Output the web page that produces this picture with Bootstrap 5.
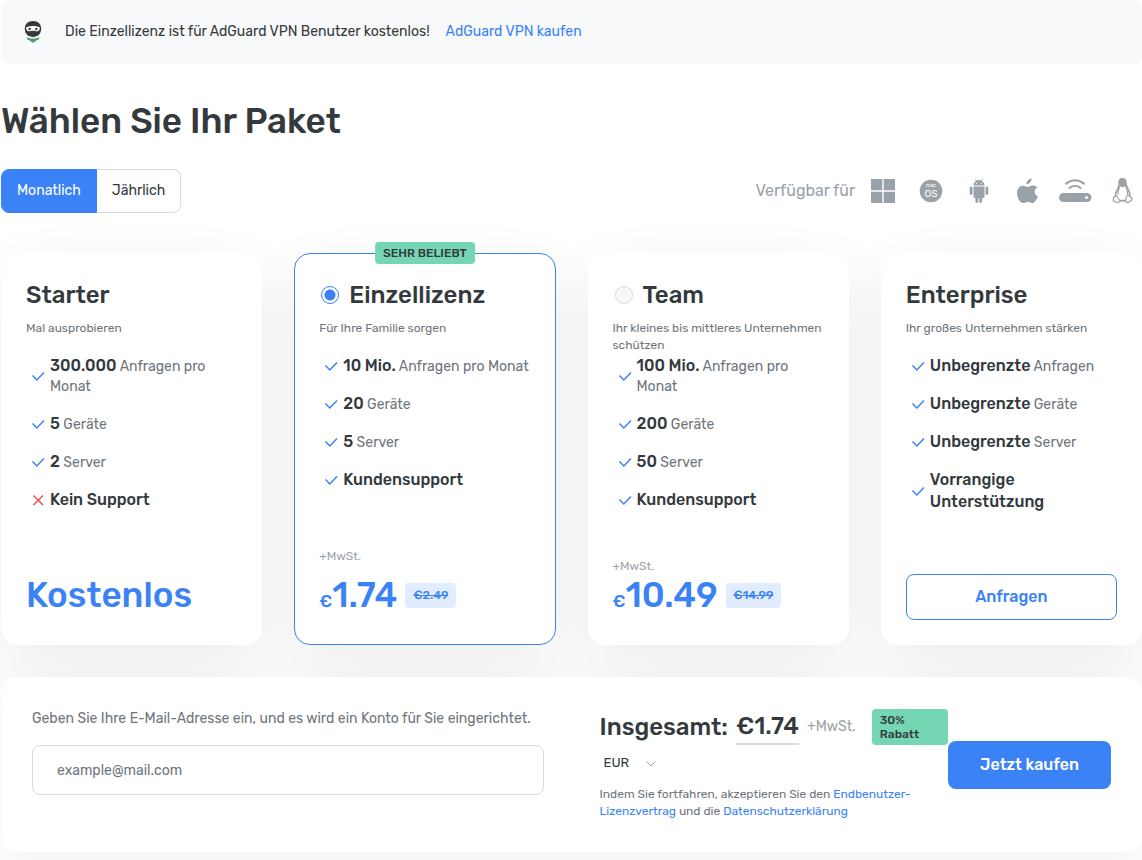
<!DOCTYPE html>
<html lang="de">
<head>
<meta charset="utf-8">
<meta name="viewport" content="width=device-width, initial-scale=1">
<title>AdGuard DNS – Wählen Sie Ihr Paket</title>
<link href="https://cdn.jsdelivr.net/npm/bootstrap@5.3.0/dist/css/bootstrap.min.css" rel="stylesheet">
<style>
:root{--ink:#33393d;--soft:#6f757b;--faint:#9aa2a9;--blue:#3c82f7;--green:#74d6b3}
body{font-family:Rubik,Roboto,"Liberation Sans",sans-serif;color:var(--ink);background:#fff;font-size:14px;line-height:20px;padding:0 0 8px 1px;overflow-x:hidden}
a{color:var(--blue);text-decoration:none}
strong,h1,h2{font-weight:500}
.text-soft{color:var(--soft)}
.text-faint{color:var(--faint)}
.notice{background:#f8f9fb;border-radius:8px;min-height:64px;padding:0 20px;line-height:22px}
.notice svg{margin-right:20px}
.page-title{font-size:35px;line-height:44px;margin:35px 0 26px}
.period .btn{font-size:14px;line-height:22px;padding:10px 15px;border:1px solid #d8dadd;border-radius:8px;color:var(--ink)}
.period .btn:last-child{border-left:0;margin-left:0;padding-left:16px}
.period .btn-check:checked+.btn{background:var(--blue);border-color:var(--blue);color:#fff}
.platforms{color:var(--faint);font-size:16px;line-height:22px;gap:16px;padding-right:7px}
.platform-icons{gap:24px}
.platforms svg{overflow:visible;display:block}
.offer{isolation:isolate}
.plans{display:grid;grid-template-columns:repeat(4,minmax(0,1fr));gap:32px;margin:40px 0 32px}
.plan{position:relative;background:#fff;border:1px solid #fff;border-radius:16px;padding:24px}
.plan::before,.order::before{content:"";position:absolute;inset:0;z-index:-1;border-radius:16px;box-shadow:0 20px 60px rgba(0,0,0,.08)}
.order::before{box-shadow:0 8px 48px rgba(0,0,0,.06)}
.plan.chosen{border-color:var(--blue)}
.plan-name{font-size:24px;line-height:34px;margin-bottom:8px}
.plan-name .form-check-input{width:18px;height:18px;margin:0 10px 0 2px;background-color:#f6f7f9;border-color:#d8dadd;flex:none}
.plan-name .form-check-input:checked{background:radial-gradient(circle,var(--blue) 5px,#fff 6px);border-color:var(--blue)}
.plan-note{font-size:12px;line-height:17px;min-height:35px;color:var(--soft);margin:0}
.features{list-style:none;margin:0;padding:0 0 46px;display:grid;gap:16px}
.features li{display:grid;grid-template-columns:24px 1fr;align-items:center;color:var(--soft)}
.features strong{font-size:16px;line-height:22px;color:var(--ink)}
.features svg{width:24px;height:20px}
.vat{font-size:12px;line-height:18px;color:var(--faint);margin-bottom:10px}
.price{font-size:35px;line-height:40px;height:45px;font-weight:500;color:var(--blue)}
.price-sign{font-size:17px}
.price del{font-size:12px;line-height:16px;background:#e1ecfe;border-radius:4px;padding:4px 8px 5px;margin:0 0 4px 8px;align-self:center}
.tag{background:var(--green);border-radius:4px;font-size:12px;line-height:14px;font-weight:500}
.popular{position:absolute;top:-12px;left:50%;transform:translateX(-50%);padding:4px 8px;white-space:nowrap}
.ask{border:1px solid var(--blue);color:var(--blue);border-radius:8px;font-weight:500;font-size:16px;line-height:22px;padding:11px}
.ask:hover,.buy:hover{background:var(--blue);color:#fff}
.order{position:relative;background:#fff;border-radius:16px;padding:32px 31px;display:grid;grid-template-columns:repeat(2,minmax(0,1fr));gap:56px}
.mail{border:1px solid #d8dadd;border-radius:8px;padding:14px 24px;height:50px;font-size:14px}
.mail::placeholder{color:var(--soft)}
.total{font-size:24px;line-height:34px;font-weight:500}
.total-sum{border-bottom:2px solid #dcdcdc}
.currency{appearance:none;border:0;font-size:13px;line-height:20px;color:var(--ink);padding:0 29px 0 4px;background:url("data:image/svg+xml,%3Csvg xmlns='http://www.w3.org/2000/svg' width='10' height='6' fill='none' stroke='%239aa2a9'%3E%3Cpath d='M.5.5 5 5 9.5.5'/%3E%3C/svg%3E") no-repeat right 3px top 8px}
.terms{font-size:12px;line-height:17px;color:var(--soft);margin:13px 0 0}
.buy{background:var(--blue);color:#fff;font-weight:500;font-size:16px;line-height:24px;padding:12px;border:0;border-radius:8px;width:163px;flex:none}
@media(max-width:900px){.plans{grid-template-columns:repeat(2,minmax(0,1fr))}.order{grid-template-columns:1fr}}
</style>
</head>
<body>
<svg class="d-none" aria-hidden="true">
  <symbol id="check" viewBox="0 0 24 20"><path d="M6.500 9.500 10.800 14 18 6.500" fill="none" stroke="#3c82f7" stroke-width="1.500"/></symbol>
  <symbol id="cross" viewBox="0 0 24 20"><path d="M7.500 5.500l9.500 9.500M17 5.500L7.500 15" fill="none" stroke="#eb5252" stroke-width="1.500"/></symbol>
</svg>

<div class="notice d-flex align-items-center">
  <svg class="flex-shrink-0" width="24" height="24" viewBox="0 0 24 24" aria-hidden="true">
    <path d="M5.500 17c4 2 9 2 13 0l-1 2.700-1.800.6L12 23l-3.700-2.700-1.800-.6z" fill="#4f9c7b"/>
    <path d="M12 1c5 0 8.200 3 8.200 7.800 0 5-3.400 8.200-8.200 8.200s-8.200-3.200-8.200-8.200C3.800 4 7 1 12 1z" fill="#33393d"/>
    <path d="M5.200 7.200c4.200-1.500 9.400-1.500 13.600 0 .2 2.200-.6 3.800-2.300 4-1.500.2-2.700-.5-4.500-.5s-3 .7-4.500.5c-1.700-.2-2.500-1.800-2.300-4z" fill="#fff"/>
    <circle cx="8.700" cy="9" r="1.200" fill="#33393d"/><circle cx="15.300" cy="9" r="1.200" fill="#33393d"/>
  </svg>
  <span>Die Einzellizenz ist für AdGuard VPN Benutzer kostenlos!</span>
  <a href="#" class="ms-3">AdGuard VPN kaufen</a>
</div>

<h1 class="page-title">Wählen Sie Ihr Paket</h1>

<div class="d-flex flex-wrap justify-content-between align-items-center">
  <div class="btn-group period" role="group" aria-label="Abrechnungszeitraum">
    <input type="radio" class="btn-check" name="period" id="monthly" checked><label class="btn" for="monthly">Monatlich</label>
    <input type="radio" class="btn-check" name="period" id="yearly"><label class="btn" for="yearly">Jährlich</label>
  </div>
  <div class="platforms d-flex align-items-center">
    <span>Verfügbar für</span>
    <div class="platform-icons d-flex">
    <svg width="24" height="24" viewBox="0 0 24 24" fill="currentColor"><path d="M0 0h11.300v11.300H0zM12.700 0H24v11.300H12.700zM0 12.700h11.300V24H0zM12.700 12.700H24V24H12.700z"/></svg>
    <svg width="24" height="24" viewBox="0 0 24 24"><circle cx="12" cy="12" r="11.300" fill="currentColor"/><g fill="#fff" text-anchor="middle"><text x="12" y="8" font-size="5">mac</text><text x="12" y="17.500" font-size="10">OS</text></g></svg>
    <svg width="24" height="24" viewBox="0 0 24 24" fill="currentColor"><path d="M8.100.1a.3.3 0 0 1 .5-.2l1.100 1.700a6 6 0 0 1 4.600 0L15.400-.1a.3.3 0 0 1 .5.2l-1 1.900c1.600.9 2.500 2.400 2.600 4.500h-11c.1-2.100 1-3.600 2.600-4.500z"/><path d="M6.500 7.500h11v10.200a1.300 1.300 0 0 1-1.300 1.300h-1.100v3.600a1.450 1.450 0 0 1-2.900 0V19h-.9v3.600a1.450 1.450 0 0 1-2.900 0V19H7.800a1.300 1.300 0 0 1-1.300-1.300z"/><rect x="2.700" y="7.500" width="2.800" height="8.500" rx="1.400"/><rect x="18.500" y="7.500" width="2.800" height="8.500" rx="1.400"/><circle cx="9.500" cy="4.300" r=".6" fill="#fff"/><circle cx="14.500" cy="4.300" r=".6" fill="#fff"/></svg>
    <svg width="24" height="24" viewBox="0 0 24 24" fill="currentColor"><path d="M16.500-.5c.2 2.600-2 5.800-5 5.700-.3-2.600 2.200-5.500 5-5.700zM22.300 8.300c-3.800 2.300-3.300 7.300.6 8.900-.9 2.600-3 6.700-5.300 6.900-1.700.1-2.600-1.100-4.800-1.100s-3.200 1.100-4.800 1.100C5.200 24.100 2 18.900 2 14c0-4.600 2.900-7.300 6-7.300 1.900 0 3.300 1.200 4.600 1.200 1.200 0 3-1.400 5.400-1.300 1.500.1 3.200.6 4.300 1.700z"/></svg>
    <svg width="24" height="24" viewBox="0 0 24 24" fill="currentColor"><path fill-rule="evenodd" d="M.5 14h23.500a4.500 4.500 0 0 1 0 9H.5a4.500 4.500 0 0 1 0-9zm23 3a1.500 1.500 0 1 0 0 3 1.500 1.500 0 0 0 0-3z"/><path d="M3 4.600C8.500.2 15.500.2 21 4.600M6.500 9c3.300-2.700 7.700-2.700 11 0" fill="none" stroke="currentColor" stroke-width="2" stroke-linecap="round"/></svg>
    <svg width="24" height="24" viewBox="0 0 24 24" fill="none" stroke="currentColor" stroke-width="1.200" stroke-linejoin="round"><path d="M8 4C8 1 9.300-.2 11.400-.2S15 1.400 15 4c0 3.300 1.200 4.400 2.600 7.200 1 2 1.600 3.600 1.300 5.800l-1 4.500H5.500L4.300 17c-.2-2 .7-4 1.900-6C7.600 8.600 8.200 7 8 4z" stroke-width="1.500"/><path d="M8 4C8 1 9.300-.2 11.400-.2S15 1.400 15 4l.4 2.500-1 1-2.900.8-2.700-1z" fill="currentColor" stroke="none"/><path d="M8.800 7.500C7.500 10.500 6.700 12 6.700 15.500M14.700 7.500c1.500 3 2.400 5.500 2.100 8.500M8.500 22h6"/><path d="M5 16.500l3.800 5c0 1.500-1 2.200-2.600 2l-4-1.500.3-3.500zM18.300 16.500l2.700 3-.4 1.700-3.400 2.300c-1.500.4-2.500-.3-2.400-2l.8-4.500z" fill="#fff"/></svg>
    </div>
  </div>
</div>

<main>
<form class="offer">
<section class="plans">
  <article class="plan d-flex flex-column">
    <h2 class="plan-name">Starter</h2>
    <p class="plan-note">Mal ausprobieren</p>
    <ul class="features">
      <li><svg><use href="#check"/></svg><span><strong>300.000</strong> Anfragen pro Monat</span></li>
      <li><svg><use href="#check"/></svg><span><strong>5</strong> Geräte</span></li>
      <li><svg><use href="#check"/></svg><span><strong>2</strong> Server</span></li>
      <li><svg><use href="#cross"/></svg><strong>Kein Support</strong></li>
    </ul>
    <div class="price mt-auto">Kostenlos</div>
  </article>

  <article class="plan chosen d-flex flex-column">
    <span class="tag popular">SEHR BELIEBT</span>
    <h2 class="plan-name"><label class="d-flex align-items-center"><input class="form-check-input" type="radio" name="plan" checked>Einzellizenz</label></h2>
    <p class="plan-note">Für Ihre Familie sorgen</p>
    <ul class="features">
      <li><svg><use href="#check"/></svg><span><strong>10 Mio.</strong> Anfragen pro Monat</span></li>
      <li><svg><use href="#check"/></svg><span><strong>20</strong> Geräte</span></li>
      <li><svg><use href="#check"/></svg><span><strong>5</strong> Server</span></li>
      <li><svg><use href="#check"/></svg><strong>Kundensupport</strong></li>
    </ul>
    <div class="vat mt-auto">+MwSt.</div>
    <div class="price d-flex align-items-baseline"><span class="price-sign">€</span>1.74<del>€2.49</del></div>
  </article>

  <article class="plan d-flex flex-column">
    <h2 class="plan-name"><label class="d-flex align-items-center"><input class="form-check-input" type="radio" name="plan">Team</label></h2>
    <p class="plan-note">Ihr kleines bis mittleres Unternehmen schützen</p>
    <ul class="features">
      <li><svg><use href="#check"/></svg><span><strong>100 Mio.</strong> Anfragen pro Monat</span></li>
      <li><svg><use href="#check"/></svg><span><strong>200</strong> Geräte</span></li>
      <li><svg><use href="#check"/></svg><span><strong>50</strong> Server</span></li>
      <li><svg><use href="#check"/></svg><strong>Kundensupport</strong></li>
    </ul>
    <div class="vat mt-auto mb-0">+MwSt.</div>
    <div class="price d-flex align-items-baseline"><span class="price-sign">€</span>10.49<del>€14.99</del></div>
  </article>

  <article class="plan d-flex flex-column">
    <h2 class="plan-name">Enterprise</h2>
    <p class="plan-note">Ihr großes Unternehmen stärken</p>
    <ul class="features">
      <li><svg><use href="#check"/></svg><span><strong>Unbegrenzte</strong> Anfragen</span></li>
      <li><svg><use href="#check"/></svg><span><strong>Unbegrenzte</strong> Geräte</span></li>
      <li><svg><use href="#check"/></svg><span><strong>Unbegrenzte</strong> Server</span></li>
      <li><svg><use href="#check"/></svg><strong>Vorrangige Unterstützung</strong></li>
    </ul>
    <button type="button" class="btn ask w-100 mt-auto">Anfragen</button>
  </article>
</section>

<section class="order">
  <div>
    <label for="mail" class="d-block text-soft">Geben Sie Ihre E-Mail-Adresse ein, und es wird ein Konto für Sie eingerichtet.</label>
    <input type="email" id="mail" class="form-control mail mt-3" placeholder="example@mail.com">
  </div>
  <div class="d-flex align-items-center">
    <div class="flex-grow-1">
      <div class="d-flex align-items-center">
        <span class="total me-2">Insgesamt:</span>
        <span class="total total-sum me-2">€1.74</span>
        <span class="text-nowrap text-faint">+MwSt.</span>
        <span class="tag flex-grow-1 ms-3 px-2 py-1">30%<br>Rabatt</span>
      </div>
      <select class="currency d-block mt-2" aria-label="Währung"><option>EUR</option></select>
      <p class="terms">Indem Sie fortfahren, akzeptieren Sie den <a href="#">Endbenutzer-Lizenzvertrag</a> und die <a href="#">Datenschutzerklärung</a></p>
    </div>
    <button type="submit" class="btn buy">Jetzt kaufen</button>
  </div>
</section>
</form>
</main>
<script src="https://cdn.jsdelivr.net/npm/bootstrap@5.3.0/dist/js/bootstrap.bundle.min.js"></script>
</body>
</html>
